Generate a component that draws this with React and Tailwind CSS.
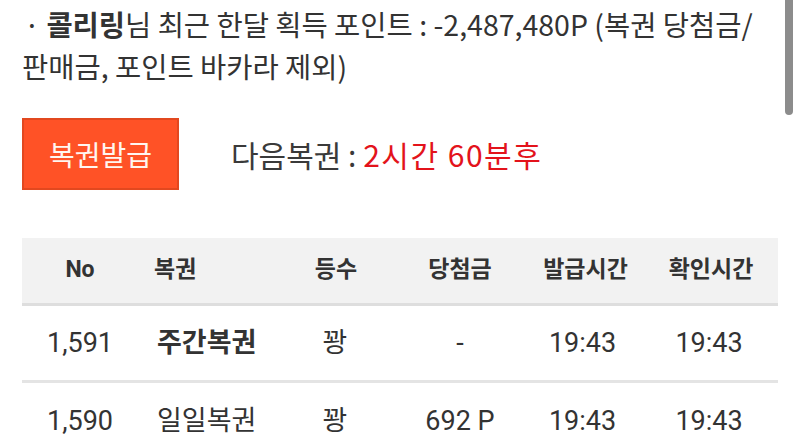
export default function App() {
  const rows = [
    { no: "1,591", name: "주간복권", bold: true, rank: "꽝", prize: "-", issued: "19:43", checked: "19:43" },
    { no: "1,590", name: "일일복권", bold: false, rank: "꽝", prize: "692 P", issued: "19:43", checked: "19:43" },
  ];
  const cols = "grid grid-cols-[116px_137px_120px_130px_115px_138px]";
  return (
    <div className="relative w-[800px] h-[444px] overflow-hidden bg-white text-[#333] font-['Noto_Sans_CJK_KR',sans-serif]">
      <div className="absolute right-[7px] top-0 w-[8px] h-[115px] rounded-b-full bg-[#8c8c8c]" />
      <p className="pl-[22px] pr-[20px] pt-[3px] text-[28.5px] leading-[42px] whitespace-nowrap">
        <span className="pl-[2px]">· </span>
        <b className="font-bold">콜리링</b>님 최근 한달 획득 포인트 : -2,487,480P (복권 당첨금/
        <br />
        판매금, 포인트 바카라 제외)
      </p>
      <div className="flex items-center mt-[31px] pl-[22px]">
        <button className="w-[157px] h-[72px] bg-[#ff5226] border-2 border-[#e2481f] text-[#fff6f0] text-[28px] leading-none">
          복권발급
        </button>
        <div className="ml-[52px] text-[30px] text-[#3a3a3a]">
          다음복권 : <span className="text-[#e3131b] tracking-[1.5px]">2시간 60분후</span>
        </div>
      </div>
      <div className="mx-[22px] mt-[48px] w-[756px] font-['Roboto','Noto_Sans_CJK_KR',sans-serif]">
        <div className={`${cols} h-[68px] items-center bg-[#f2f2f2] border-b-[3px] border-[#dedede] text-[23px] font-bold text-[#333]`}>
          <div className="text-center">No</div>
          <div className="pl-[16px]">복권</div>
          <div className="text-center pl-[2px]">등수</div>
          <div className="text-center">당첨금</div>
          <div className="text-center pl-[6px]">발급시간</div>
          <div className="text-center pl-[4px]">확인시간</div>
        </div>
        {rows.map((r, i) => (
          <div key={i} className={`${cols} h-[77px] items-center text-[27px] text-[#333] ${i === 0 ? "border-b-[3px] border-[#e4e4e4]" : ""}`}>
            <div className="text-center">{r.no}</div>
            <div className={`pl-[19px] ${r.bold ? "font-bold" : ""}`}>{r.name}</div>
            <div className="text-center">{r.rank}</div>
            <div className="text-center">{r.prize}</div>
            <div className="text-center">{r.issued}</div>
            <div className="text-center">{r.checked}</div>
          </div>
        ))}
      </div>
    </div>
  );
}
